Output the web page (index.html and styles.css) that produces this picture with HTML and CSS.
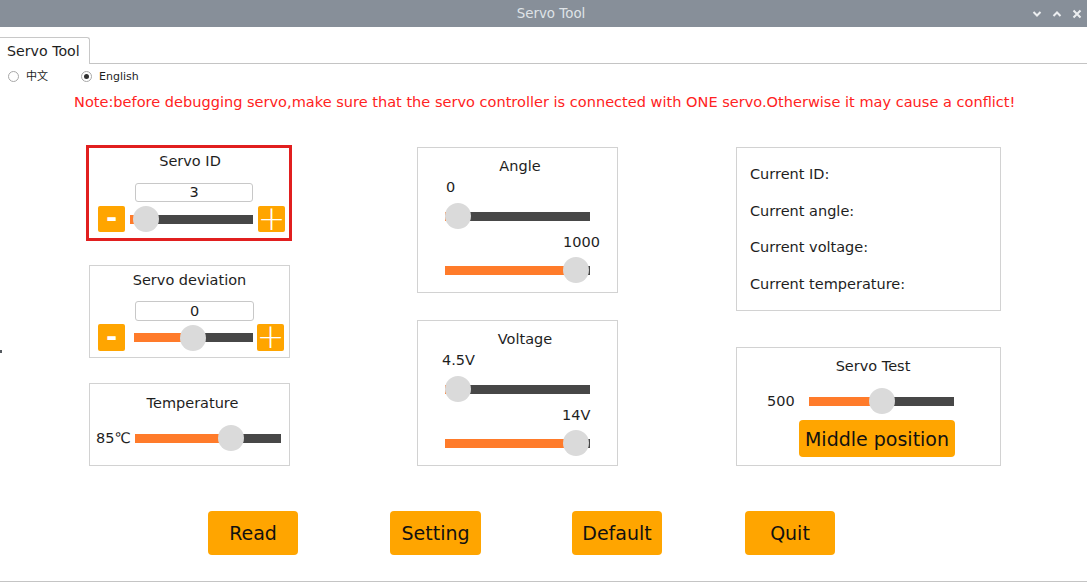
FILE: index.html
```html
<!DOCTYPE html>
<html lang="en">
<head>
<meta charset="utf-8">
<title>Servo Tool</title>
<link rel="stylesheet" href="styles.css">
</head>
<body>
<div class="window">
  <div class="titlebar">
    <div></div>
    <div class="wtitle">Servo Tool</div>
    <div class="wcontrols">
      <svg class="wc" viewBox="0 0 10 8" width="10" height="8"><path d="M1.5 2 L5 5.5 L8.5 2" fill="none" stroke="#eceef0" stroke-width="2"/></svg>
      <svg class="wc" viewBox="0 0 10 8" width="10" height="8"><path d="M1.5 6 L5 2.5 L8.5 6" fill="none" stroke="#eceef0" stroke-width="2"/></svg>
      <svg class="wc" viewBox="0 0 10 10" width="10" height="10"><path d="M1.5 1.5 L8.5 8.5 M8.5 1.5 L1.5 8.5" fill="none" stroke="#eceef0" stroke-width="2"/></svg>
    </div>
  </div>
  <div class="app">
    <span class="edge-dot"></span>
    <div class="tabbar">
      <div class="tab">Servo Tool</div>
      <div class="tabfill"></div>
    </div>
    <div class="langs">
      <label class="lang lang-first"><span class="radio"></span><span>中文</span></label>
      <label class="lang"><span class="radio checked"></span><span>English</span></label>
    </div>
    <p class="note">Note:before debugging servo,make sure that the servo controller is connected with ONE servo.Otherwise it may cause a conflict!</p>

    <div class="main">
      <div class="col col1">
        <div class="box box-id">
          <div class="btitle">Servo ID</div>
          <div class="field field-id">3</div>
          <div class="ctrl-row">
            <div class="obtn minus">-</div>
            <div class="slider s-id" style="--pos:16px"><div class="track"><div class="fill"></div></div><div class="knob"></div></div>
            <div class="obtn plus">+</div>
          </div>
        </div>
        <div class="box box-dev">
          <div class="btitle">Servo deviation</div>
          <div class="field field-dev">0</div>
          <div class="ctrl-row row-dev">
            <div class="obtn minus">-</div>
            <div class="slider s-dev" style="--pos:59px"><div class="track"><div class="fill"></div></div><div class="knob"></div></div>
            <div class="obtn plus">+</div>
          </div>
        </div>
        <div class="box box-temp">
          <div class="btitle t-temp">Temperature</div>
          <div class="temp-row">
            <span class="temp-val">85℃</span>
            <div class="slider s-temp" style="--pos:96px"><div class="track"><div class="fill"></div></div><div class="knob"></div></div>
          </div>
        </div>
      </div>

      <div class="col col2">
        <div class="box box-range">
          <div class="btitle t-angle">Angle</div>
          <div class="rlabel rl-min">0</div>
          <div class="slider s-range" style="--pos:13px"><div class="track"><div class="fill"></div></div><div class="knob"></div></div>
          <div class="rlabel rl-max">1000</div>
          <div class="slider s-range s-second" style="--pos:131px"><div class="track"><div class="fill"></div></div><div class="knob"></div></div>
        </div>
        <div class="box box-range box-volt">
          <div class="btitle t-volt">Voltage</div>
          <div class="rlabel rl-vmin">4.5V</div>
          <div class="slider s-range" style="--pos:13px"><div class="track"><div class="fill"></div></div><div class="knob"></div></div>
          <div class="rlabel rl-vmax">14V</div>
          <div class="slider s-range s-second" style="--pos:131px"><div class="track"><div class="fill"></div></div><div class="knob"></div></div>
        </div>
      </div>

      <div class="col col3">
        <div class="box box-info">
          <div class="info">Current ID:</div>
          <div class="info">Current angle:</div>
          <div class="info">Current voltage:</div>
          <div class="info">Current temperature:</div>
        </div>
        <div class="box box-test">
          <div class="btitle t-test">Servo Test</div>
          <div class="test-row">
            <span class="test-val">500</span>
            <div class="slider s-test" style="--pos:73px"><div class="track"><div class="fill"></div></div><div class="knob"></div></div>
          </div>
          <div class="obtn mid-btn">Middle position</div>
        </div>
      </div>
    </div>

    <div class="actions">
      <div class="obtn act act-read">Read</div>
      <div class="obtn act act-set">Setting</div>
      <div class="obtn act act-def">Default</div>
      <div class="obtn act act-quit">Quit</div>
    </div>
  </div>
</div>
</body>
</html>
```

FILE: styles.css
```css
* { box-sizing: border-box; }
html, body { margin: 0; padding: 0; background: #ffffff; }
body {
  font-family: "DejaVu Sans", "Noto Sans CJK SC", sans-serif;
  color: #1e1e1e;
  width: 1087px;
  height: 582px;
  overflow: hidden;
}
.window { width: 1087px; height: 582px; }

.titlebar {
  height: 27px;
  background: #878f99;
  display: grid;
  grid-template-columns: 1fr auto 1fr;
  align-items: center;
  padding-left: 15px;
}
.wtitle { font-size: 13.4px; color: #dfe3e7; line-height: 27px; }
.wcontrols {
  justify-self: end;
  display: flex;
  align-items: center;
  gap: 10px;
  padding-right: 5px;
}
.wc { display: block; }

.app {
  position: relative;
  height: 555px;
  border-bottom: 1px solid #c4c4c4;
}
.edge-dot {
  position: absolute;
  left: 0; top: 323px;
  width: 2px; height: 3px;
  background: #555a60;
}

.tabbar {
  height: 37px;
  padding-top: 10px;
  display: flex;
}
.tab {
  height: 27px;
  border-top: 1px solid #c8c8c8;
  border-right: 1px solid #c8c8c8;
  border-top-right-radius: 3px;
  padding: 5px 9px 0 7px;
  font-size: 14.2px;
  line-height: 17px;
  color: #1e1e1e;
}
.tabfill { flex: 1; border-bottom: 1px solid #c4c4c4; }

.langs {
  margin-top: 6px;
  height: 13px;
  padding-left: 8px;
  display: flex;
  align-items: center;
  font-size: 11px;
  line-height: 13px;
}
.lang { display: flex; align-items: center; gap: 7px; }
.lang-first { width: 73px; }
.radio {
  width: 11px; height: 11px;
  border: 1px solid #a8a8a8;
  border-radius: 50%;
  background: #fff;
  display: flex; align-items: center; justify-content: center;
}
.radio.checked::after {
  content: "";
  width: 5px; height: 5px;
  border-radius: 50%;
  background: #303030;
}

.note {
  margin: 10px 0 0;
  padding-left: 74px;
  font-size: 14.55px;
  line-height: 17px;
  color: #ff2222;
  white-space: nowrap;
}

.main {
  margin-top: 35px;
  padding-left: 86px;
  display: flex;
  align-items: flex-start;
}
.col { display: flex; flex-direction: column; align-items: flex-start; }
.col1 { width: 206px; }
.col2 { margin-left: 125px; margin-top: 2px; }
.col3 { margin-left: 118px; margin-top: 2px; }

.box {
  border: 1px solid #d2d2d2;
  background: #fff;
  display: flex;
  flex-direction: column;
  align-items: flex-start;
}
.btitle {
  align-self: stretch;
  text-align: center;
  font-size: 14.5px;
  line-height: 17px;
}

/* Servo ID */
.box-id {
  width: 206px; height: 96px;
  border: 3px solid #e11f1f;
}
.box-id .btitle { margin-top: 5px; padding-left: 2px; }
.field {
  border: 1px solid #c8c8c8;
  border-radius: 3px;
  font-size: 14.5px;
  text-align: center;
  background: #fff;
}
.field-id { margin-top: 13px; margin-left: 46px; width: 118px; height: 19px; line-height: 17px; }
.ctrl-row {
  margin-top: 4px;
  padding-left: 9px;
  height: 26px;
  display: flex;
  align-items: center;
}
.obtn {
  background: #ffa500;
  border-radius: 2px;
  display: flex;
  align-items: center;
  justify-content: center;
  color: #111;
}
.minus, .plus {
  width: 27px; height: 26px;
  color: #ffffff;
  line-height: 1;
}
.minus { font-size: 27px; font-weight: bold; padding-bottom: 3px; }
.plus { font-size: 33px; font-weight: 200; padding-bottom: 2px; }

.slider {
  position: relative;
  height: 26px;
  display: flex;
  align-items: center;
}
.track {
  flex: 1;
  height: 9px;
  background: #474747;
  position: relative;
}
.fill {
  position: absolute;
  left: 0; top: 0; bottom: 0;
  width: var(--pos);
  background: #ff7b2a;
}
.knob {
  position: absolute;
  top: 0;
  left: calc(var(--pos) - 13px);
  width: 26px; height: 26px;
  border-radius: 50%;
  background: #dadada;
}
.s-id { width: 123px; margin: 0 5px 0 5px; }

/* deviation */
.box-dev { width: 201px; height: 93px; margin-top: 24px; margin-left: 3px; }
.box-dev .btitle { margin-top: 6px; padding-left: 0; }
.field-dev { margin-top: 12px; margin-left: 45px; width: 119px; height: 20px; line-height: 18px; }
.row-dev { margin-top: 3px; padding-left: 8px; height: 27px; }
.row-dev .minus, .row-dev .plus { height: 27px; }
.s-dev { width: 119px; margin: 0 4px 0 9px; }

/* temperature */
.box-temp { width: 201px; height: 83px; margin-top: 25px; margin-left: 3px; }
.t-temp { margin-top: 11px; padding-left: 6px; }
.temp-row {
  margin-top: 13px;
  padding-left: 6px;
  display: flex;
  align-items: center;
  height: 26px;
}
.temp-val { font-size: 14.5px; width: 39px; line-height: 17px; }
.s-temp { width: 146px; }

/* range boxes */
.box-range { width: 201px; height: 146px; }
.box-volt { margin-top: 27px; }
.t-angle { margin-top: 10px; padding-left: 5px; }
.t-volt { margin-top: 10px; padding-left: 15px; }
.rlabel { font-size: 14.5px; line-height: 17px; }
.rl-min { margin-top: 4px; margin-left: 28px; }
.rl-vmin { margin-top: 4px; margin-left: 24px; }
.rl-max { margin-top: 5px; margin-left: 145px; }
.rl-vmax { margin-top: 5px; margin-left: 144px; }
.s-range { width: 145px; margin-left: 27px; margin-top: 7px; }
.s-second { margin-top: 6px; }

/* info */
.box-info {
  width: 265px; height: 164px;
  padding: 18px 0 0 13px;
  gap: 19.6px;
}
.info { font-size: 14.5px; line-height: 17px; }

/* servo test */
.box-test { width: 265px; height: 119px; margin-top: 36px; }
.t-test { margin-top: 10px; padding-left: 9px; }
.test-row {
  margin-top: 13px;
  padding-left: 30px;
  display: flex;
  align-items: center;
  height: 26px;
}
.test-val { font-size: 14.5px; line-height: 17px; width: 42px; }
.s-test { width: 145px; }
.mid-btn {
  margin-top: 6px;
  margin-left: 62px;
  width: 156px; height: 37px;
  border-radius: 4px;
  font-size: 19px;
}

/* actions */
.actions {
  margin-top: 45px;
  padding-left: 208px;
  display: flex;
}
.act {
  height: 44px;
  width: 90px;
  border-radius: 4px;
  font-size: 19px;
}
.act-set { margin-left: 92px; width: 91px; }
.act-def { margin-left: 91px; }
.act-quit { margin-left: 83px; }
```
